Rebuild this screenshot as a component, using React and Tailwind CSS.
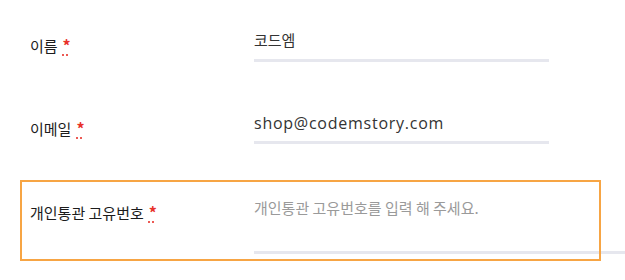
import React from "react"

// required mark: red star with dotted underline (abbr)
function Required() {
  return (
    <abbr
      title="required"
      className="ml-[4px] px-[1px] text-[16px] font-bold text-[#e8322b] underline decoration-dotted decoration-[#e8322b] underline-offset-[3px]"
    >
      *
    </abbr>
  )
}

function Row({ label, labelTop, children, className = "" }) {
  return (
    <div className={`flex items-start ${className}`}>
      <label
        className={`w-[254px] shrink-0 pl-[30px] text-[15px] leading-5 font-normal text-[#1c1c1c] ${labelTop}`}
      >
        {label}
        <Required />
      </label>
      {children}
    </div>
  )
}

export default function App() {
  const font = { fontFamily: "'Noto Sans CJK KR', 'Noto Sans', sans-serif" }

  return (
    <div className="w-[625px] h-[280px] overflow-hidden bg-white" style={font}>
      <Row label="이름" labelTop="mt-[35px]" className="h-[83px]">
        <div className="mt-[22px] w-[295px] h-[40px] border-b-[3px] border-[#e6e7ee] flex items-center">
          <span className="text-[15px] text-[#333]">코드엠</span>
        </div>
      </Row>

      <Row label="이메일" labelTop="mt-[35px]" className="h-[83px]">
        <div className="mt-[21px] w-[295px] h-[40px] border-b-[3px] border-[#e6e7ee] flex items-center">
          <span
            className="text-[16px] text-[#333] tracking-[0.75px]"
            style={{ fontFamily: "'Open Sans', 'Noto Sans CJK KR', sans-serif" }}
          >
            shop@codemstory.com
          </span>
        </div>
      </Row>

      <div className="relative mt-[-1px]">
        <Row label="개인통관 고유번호" labelTop="mt-[37px]" className="h-[90px]">
          <div className="mt-[22px] grow h-[67px] border-b-[3px] border-[#e6e7ee] pt-[8px]">
            <span className="text-[15px] text-[#9a9a9a]">개인통관 고유번호를 입력 해 주세요.</span>
          </div>
        </Row>
        {/* highlight overlay */}
        <div className="pointer-events-none absolute left-[20px] top-[15px] w-[581px] h-[81px] border-2 border-[#f7a544]" />
      </div>
    </div>
  )
}
